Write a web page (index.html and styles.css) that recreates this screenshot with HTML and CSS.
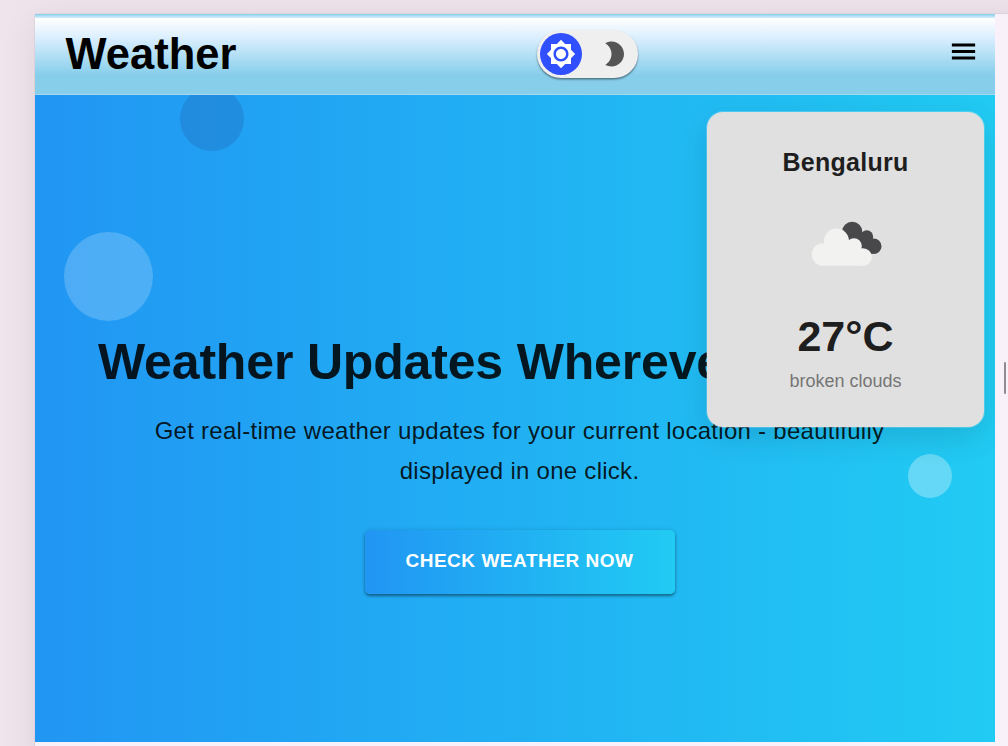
FILE: index.html
```html
<!DOCTYPE html>
<html lang="en">
<head>
<meta charset="utf-8">
<title>Weather</title>
<link rel="stylesheet" href="styles.css">
</head>
<body>
<div class="page">
  <div class="window">
    <div class="topline"></div>
    <header class="header">
      <div class="brand">Weather</div>
      <div class="toggle">
        <span class="mode active">
          <svg width="30" height="30" viewBox="0 0 24 24"><path d="M20 8.69V4h-4.69L12 .69 8.69 4H4v4.69L.69 12 4 15.31V20h4.69L12 23.31 15.31 20H20v-4.69L23.31 12 20 8.69zM12 18c-3.31 0-6-2.69-6-6s2.69-6 6-6 6 2.69 6 6-2.69 6-6 6zm0-10c-2.21 0-4 1.79-4 4s1.79 4 4 4 4-1.79 4-4-1.79-4-4-4z"/></svg>
        </span>
        <span class="mode">
          <svg width="30" height="30" viewBox="0 0 24 24"><path d="M10 2c-1.82 0-3.53.5-5 1.35C7.99 5.08 10 8.3 10 12s-2.01 6.92-5 8.65C6.47 21.5 8.18 22 10 22c5.52 0 10-4.48 10-10S15.52 2 10 2z"/></svg>
        </span>
      </div>
      <svg class="menu" width="31" height="31" viewBox="0 0 24 24"><path d="M3 18.1h18v-2.3H3v2.3zm0-4.95h18v-2.3H3v2.3zm0-7.25v2.3h18V5.9H3z"/></svg>
    </header>
    <main class="hero">
      <span class="bubble dark"></span>
      <span class="bubble large"></span>
      <span class="bubble small"></span>
      <h1 class="title">Weather Updates Wherever You Are</h1>
      <p class="subtitle">Get real-time weather updates for your current location - beautifully<br>displayed in one click.</p>
      <button class="cta">CHECK WEATHER NOW</button>
      <aside class="card">
        <div class="city">Bengaluru</div>
        <svg class="cloud" width="72" height="46" viewBox="41 20.5 72 46">
          <g fill="#48484a"><circle cx="82.2" cy="31.5" r="10.2"/><circle cx="96.8" cy="36.2" r="6.4"/><circle cx="103.7" cy="45.8" r="7.8"/><path d="M76 36L91.5 31.5l11 6.5 0 15H90z"/></g>
          <g fill="#f2f2f0"><circle cx="53" cy="54" r="11.2"/><circle cx="66.5" cy="40.5" r="12.5"/><circle cx="84" cy="45.5" r="7.8"/><circle cx="93" cy="56.5" r="8.8"/><path d="M53 44l13-8 12 3.5 13.5 8L94 65.3H53z"/></g>
        </svg>
        <div class="temp">27°C</div>
        <div class="condition">broken clouds</div>
      </aside>
    </main>
  </div>
  <div class="scrollbar"></div>
</div>
</body>
</html>
```
FILE: styles.css
```css
body {
  margin: 0;
  height: 746px;
  box-sizing: border-box;
  padding: 14px 0 0 35px;
  overflow: hidden;
  background: #f0e4ec;
  font-family: "Liberation Sans", Arial, sans-serif;
}
.page {
  position: relative;
  width: 1000px;
  height: 760px;
  background: #f9f1f9;
  box-shadow: 0 0 1px rgba(0, 0, 0, .25), 0 4px 34px rgba(0, 0, 0, .08);
}
.window { width: 960px; }
.topline {
  height: 4px;
  background: linear-gradient(#87ceeb, #d9effc);
}
.header {
  display: flex;
  align-items: flex-start;
  height: 77px;
  box-sizing: border-box;
  border-bottom: 1px solid #a5d8ee;
  background: linear-gradient(#fff 0, #dceffe 25%, #87ceeb 75%);
}
.brand {
  width: 502px;
  box-sizing: border-box;
  padding: 11px 0 0 30.5px;
  font-size: 43.5px;
  line-height: 50px;
  font-weight: 700;
  color: #000;
}
.toggle {
  display: flex;
  align-items: center;
  justify-content: space-between;
  box-sizing: border-box;
  width: 101px;
  height: 48px;
  margin-top: 12px;
  padding: 0 3px;
  border-radius: 24px;
  background: #efefef;
  box-shadow: 0 1.5px 2px rgba(0, 0, 0, .45);
}
.mode {
  display: flex;
  align-items: center;
  justify-content: center;
  width: 42px;
  height: 42px;
  border-radius: 50%;
  fill: #555;
}
.mode.active { background: #304ffe; fill: #fff; }
.menu { margin: 18px 0 0 310px; }
.hero {
  position: relative;
  display: flex;
  flex-direction: column;
  align-items: center;
  box-sizing: border-box;
  width: 960px;
  height: 647px;
  padding: 237px 0 0 9px;
  overflow: hidden;
  background: linear-gradient(90deg, #2196f3, #21cbf3);
  color: rgba(0, 0, 0, .87);
}
.bubble { position: absolute; border-radius: 50%; }
.dark { left: 145px; top: -8px; width: 64px; height: 64px; background: rgba(33, 110, 190, .38); }
.large { left: 29px; top: 137px; width: 89px; height: 89px; background: rgba(255, 255, 255, .2); }
.small { left: 873px; top: 359px; width: 44px; height: 44px; background: rgba(255, 255, 255, .3); }
.title {
  margin: 0;
  font-size: 50px;
  line-height: 60px;
  letter-spacing: -.17px;
  white-space: nowrap;
}
.subtitle {
  margin: 19px 0 0;
  font-size: 24px;
  line-height: 40px;
  letter-spacing: .27px;
  text-align: center;
  white-space: nowrap;
}
.cta {
  width: 310px;
  height: 64px;
  margin-top: 39px;
  padding: 0 0 3px;
  border: 0;
  border-radius: 5px;
  background: linear-gradient(90deg, #2196f3, #21cbf3);
  box-shadow: 0 2px 3px rgba(0, 0, 0, .4), 0 0 5px rgba(0, 0, 0, .12);
  color: #fff;
  font: 700 19px "Liberation Sans", Arial, sans-serif;
  letter-spacing: .53px;
}
.card {
  position: absolute;
  left: 672px;
  top: 17px;
  display: flex;
  flex-direction: column;
  align-items: center;
  box-sizing: border-box;
  width: 277px;
  height: 315px;
  padding-top: 35px;
  border-radius: 16px;
  background: #e0e0e0;
  box-shadow: 0 0 0 1px rgba(255, 255, 255, .2), 0 10px 32px rgba(0, 0, 0, .12);
  color: #1e1e1e;
}
.city { font-size: 25px; line-height: 30px; font-weight: 700; letter-spacing: .25px; }
.cloud { margin: 43.5px 0 0 2px; }
.temp { margin-top: 44.5px; font-size: 43px; line-height: 50px; font-weight: 700; }
.condition { margin-top: 10px; font-size: 18px; line-height: 20px; color: #757575; }
.scrollbar {
  position: absolute;
  left: 969px;
  top: 348px;
  width: 2px;
  height: 32px;
  border-radius: 1px;
  background: #8e8b8e;
}
```
